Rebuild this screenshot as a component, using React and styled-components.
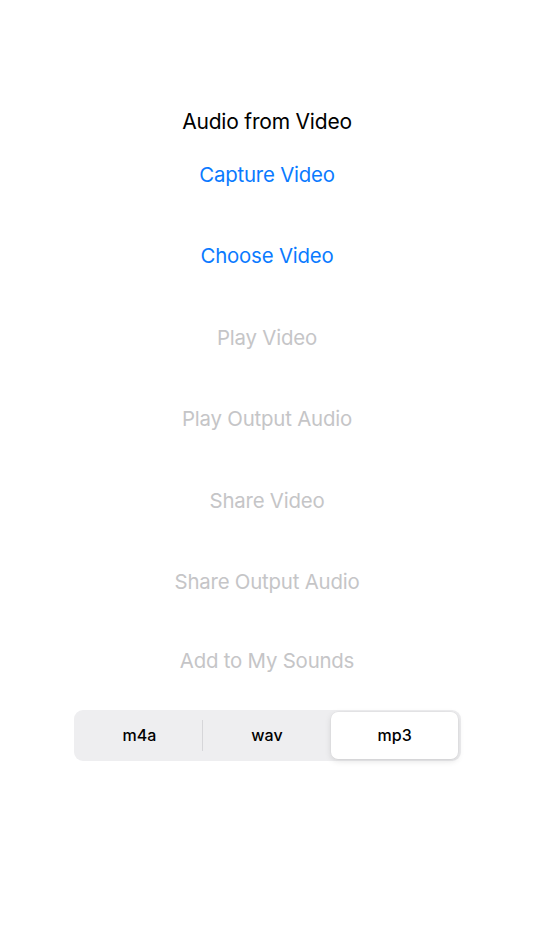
import React, { useState } from "react";
import styled, { createGlobalStyle } from "styled-components";

const GlobalStyle = createGlobalStyle`
  html, body {
    margin: 0;
    padding: 0;
    background: #ffffff;
    font-family: Inter, "Liberation Sans", sans-serif;
  }
`;

const Screen = styled.div`
  width: 534px;
  height: 950px;
  display: flex;
  flex-direction: column;
  align-items: center;
  padding-top: 107px;
  box-sizing: border-box;
`;

const Title = styled.h1`
  margin: 0;
  font-size: 21px;
  font-weight: 400;
  line-height: 30px;
  color: #000000;
  letter-spacing: -0.2px;
`;

const ActionList = styled.div`
  display: flex;
  flex-direction: column;
  align-items: center;
  gap: 47.5px;
  margin-top: 20px;
`;

const ActionButton = styled.button`
  border: none;
  background: none;
  padding: 0;
  height: 34px;
  font-family: inherit;
  font-size: 20.4px;
  font-weight: 400;
  letter-spacing: -0.2px;
  color: ${(p) => (p.disabled ? "#c5c5c7" : "#0a7aff")};
  cursor: ${(p) => (p.disabled ? "default" : "pointer")};

  &:last-child {
    margin-top: -3px;
  }
`;

const Segmented = styled.div`
  margin-top: 33px;
  width: 387px;
  height: 51px;
  box-sizing: border-box;
  padding: 2px;
  border-radius: 9px;
  background: #eeeef0;
  display: grid;
  grid-template-columns: 1fr 1fr 1fr;
`;

const Segment = styled.button`
  position: relative;
  border: none;
  border-radius: 7px;
  padding: 0 0 2px;
  font-family: inherit;
  font-size: 16px;
  font-weight: 500;
  color: #000;
  background: ${(p) => (p.active ? "#ffffff" : "transparent")};
  box-shadow: ${(p) =>
    p.active ? "0 2px 6px rgba(0,0,0,0.12), 0 0 0 0.5px rgba(0,0,0,0.04)" : "none"};
  cursor: pointer;

  &::after {
    content: "";
    display: ${(p) => (p.divider ? "block" : "none")};
    position: absolute;
    right: 0;
    top: 8px;
    bottom: 8px;
    width: 1px;
    background: #d6d6d9;
  }
`;

const actions = [
  { label: "Capture Video", enabled: true },
  { label: "Choose Video", enabled: true },
  { label: "Play Video" },
  { label: "Play Output Audio" },
  { label: "Share Video" },
  { label: "Share Output Audio" },
  { label: "Add to My Sounds" },
];

const formats = ["m4a", "wav", "mp3"];

const App = () => {
  const [format, setFormat] = useState(2);
  return (
    <Screen>
      <GlobalStyle />
      <Title>Audio from Video</Title>
      <ActionList>
        {actions.map((a) => (
          <ActionButton key={a.label} disabled={!a.enabled}>
            {a.label}
          </ActionButton>
        ))}
      </ActionList>
      <Segmented>
        {formats.map((f, i) => (
          <Segment
            key={f}
            active={i === format}
            divider={i === 0 && format === 2}
            onClick={() => setFormat(i)}
          >
            {f}
          </Segment>
        ))}
      </Segmented>
    </Screen>
  );
};

export default App;
